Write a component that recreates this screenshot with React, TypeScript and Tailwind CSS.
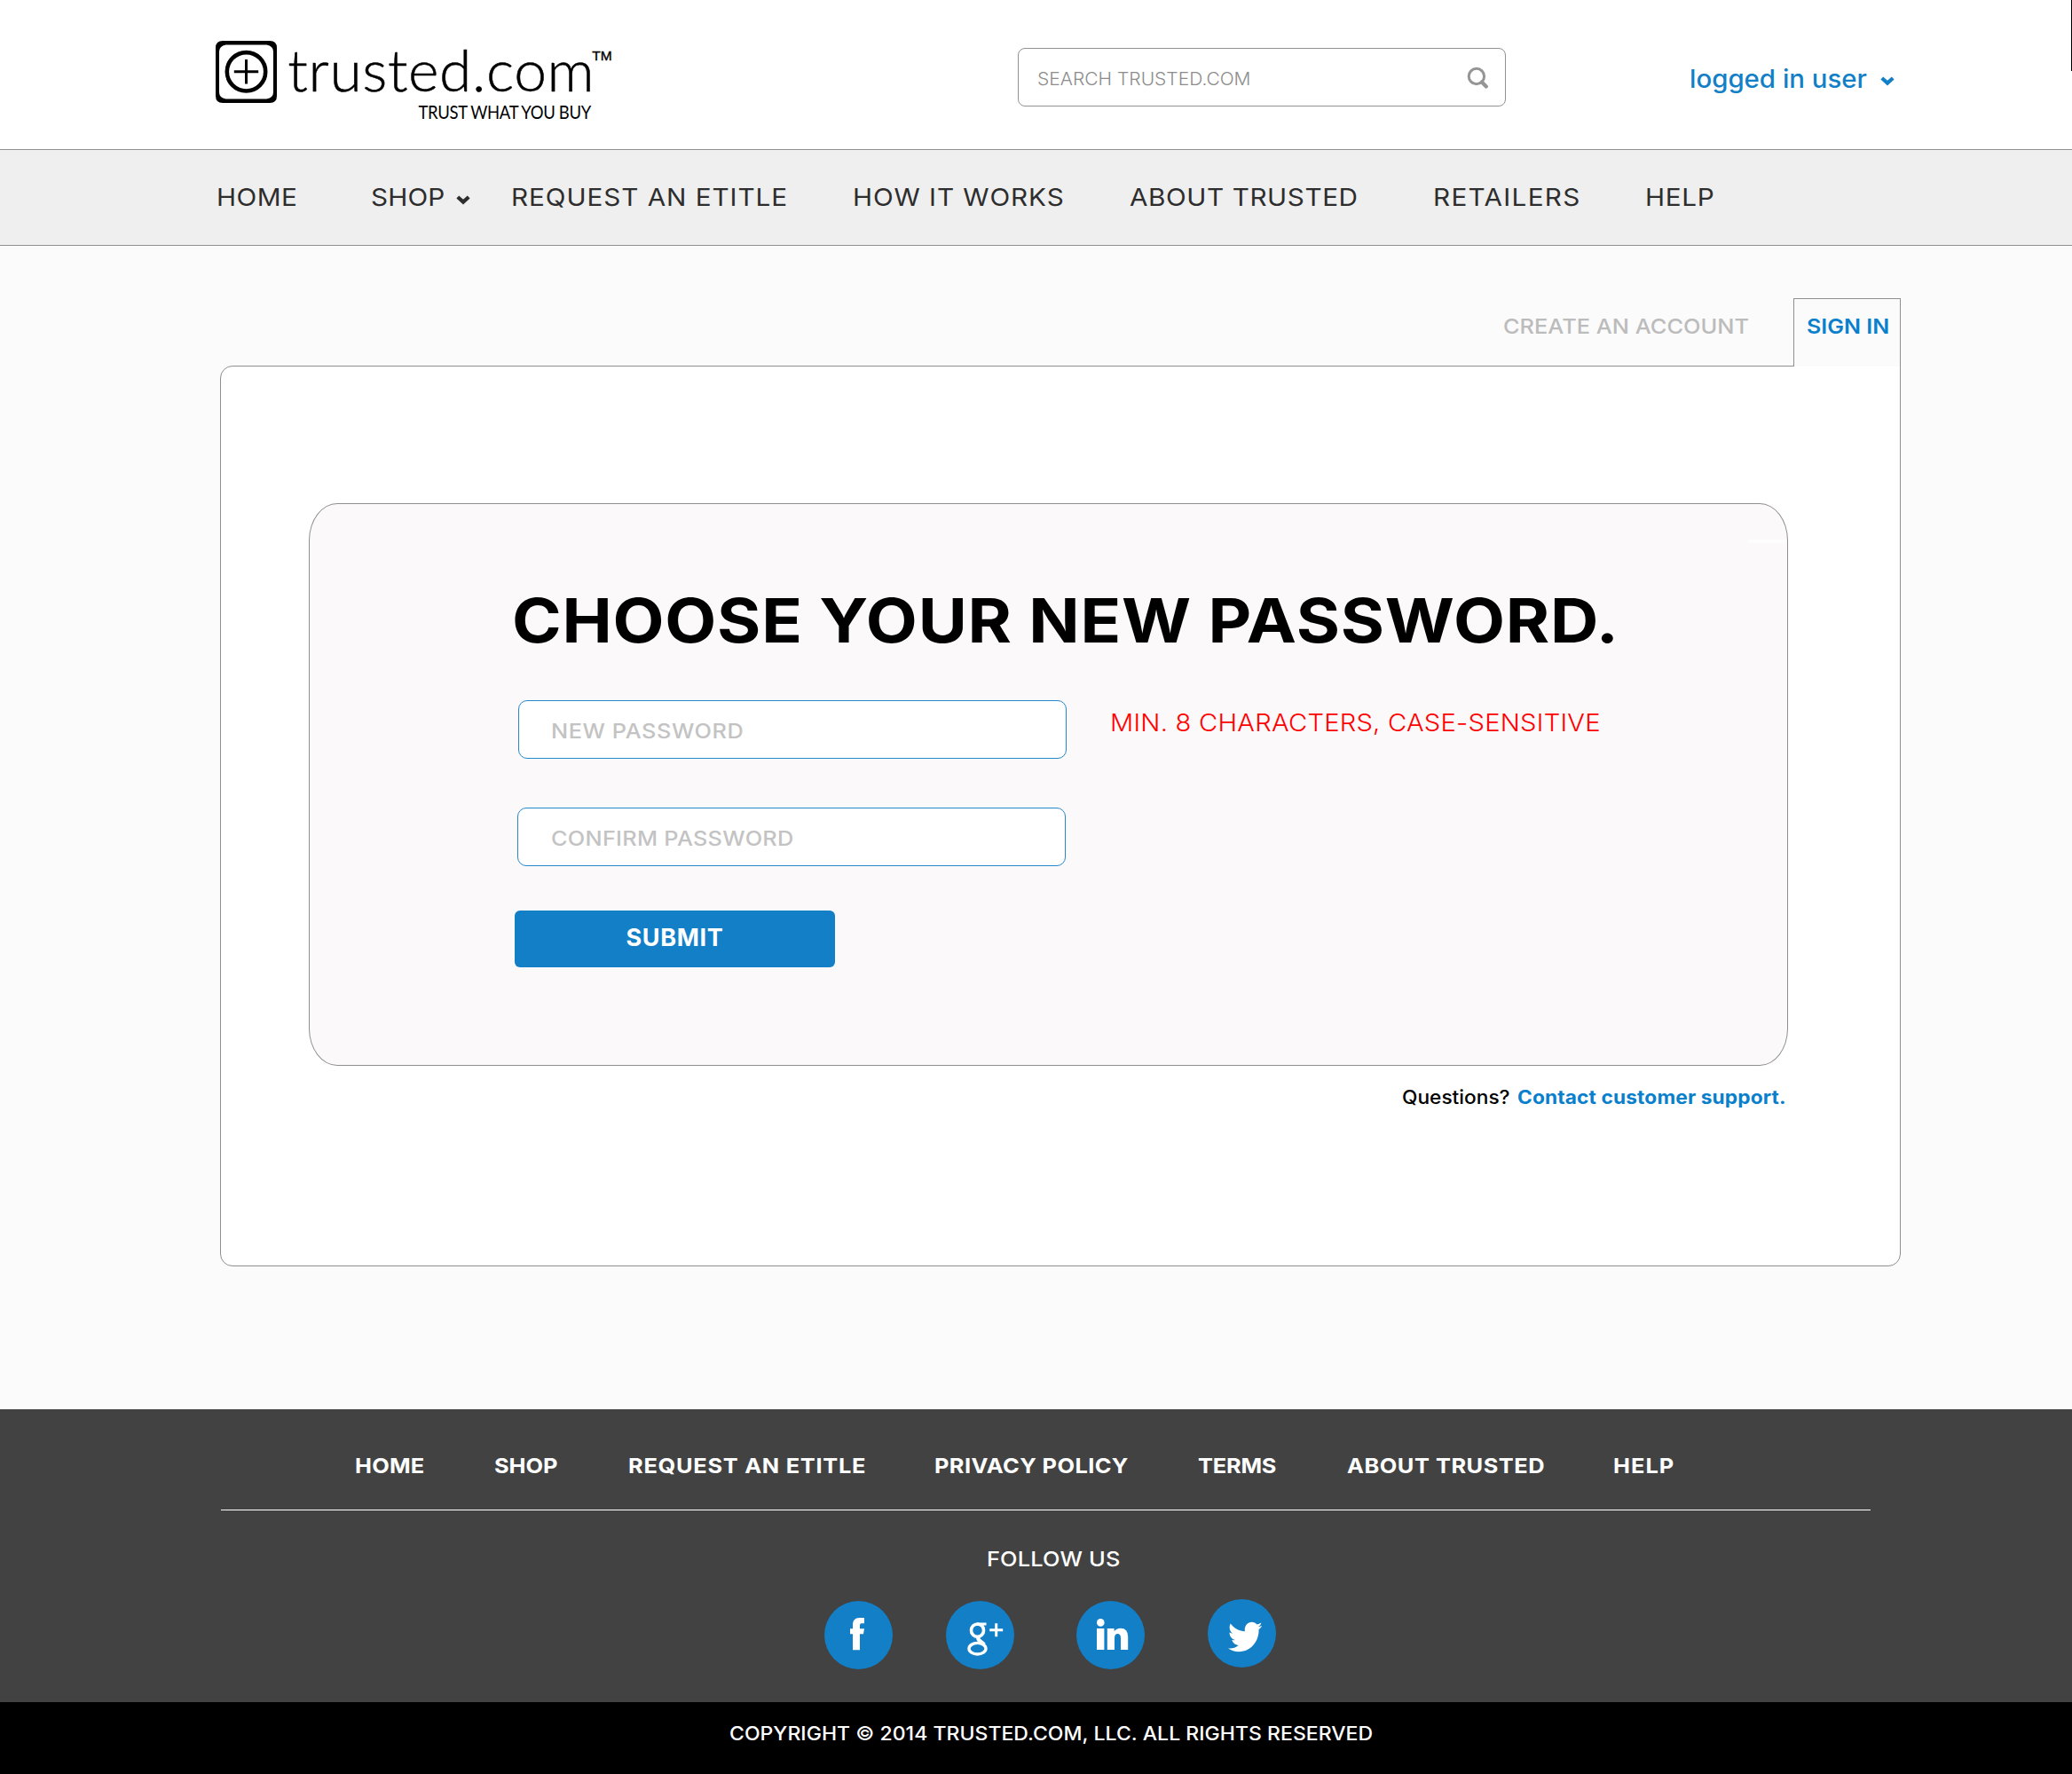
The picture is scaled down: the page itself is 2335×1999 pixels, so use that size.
import { FaTwitter } from "react-icons/fa";

const mainNav = [
  { label: "HOME", width: "w-[173.5px]", text: "tracking-[0.45px]" },
  { label: "SHOP", width: "w-[158.2px]", text: "w-[86px] tracking-[0.12px]", menu: true },
  { label: "REQUEST AN ETITLE", width: "w-[385.3px]", text: "tracking-[0.86px]" },
  { label: "HOW IT WORKS", width: "w-[312.5px]", text: "tracking-[0.84px]" },
  { label: "ABOUT TRUSTED", width: "w-[341.1px]", text: "tracking-[0.53px]" },
  { label: "RETAILERS", width: "w-[239.4px]", text: "tracking-[1.2px]" },
  { label: "HELP", width: "w-[90px]", text: "tracking-[0.64px]" },
];

const footerNav = [
  { label: "HOME", width: "w-[156.5px]", text: "tracking-[0.2px]" },
  { label: "SHOP", width: "w-[151.3px]", text: "tracking-[-0.05px]" },
  { label: "REQUEST AN ETITLE", width: "w-[345.6px]", text: "tracking-[0.67px]" },
  { label: "PRIVACY POLICY", width: "w-[297.1px]", text: "tracking-[0.37px]" },
  { label: "TERMS", width: "w-[167.2px]", text: "tracking-[-0.2px]" },
  { label: "ABOUT TRUSTED", width: "w-[300.5px]", text: "tracking-[0.48px]" },
  { label: "HELP", width: "w-[90px]", text: "tracking-[0.97px]" },
];

function Chevron({ className }: { className: string }) {
  return (
    <svg viewBox="0 0 16 11" className={`h-[11px] w-4 shrink-0 ${className}`} fill="none" stroke="currentColor" strokeWidth="4.2">
      <path d="M1.8 2 8 7.6 14.2 2" />
    </svg>
  );
}

function Logo() {
  return (
    <a className="flex w-[904px] text-black">
      <svg viewBox="0 0 69 70" className="mt-[45.5px] h-[70px] w-[69px] shrink-0">
        <path
          fillRule="evenodd"
          d="M8 0H61Q69 0 69 8V62Q69 70 61 70H8Q0 70 0 62V8Q0 0 8 0ZM11.5 4.5Q4 6 4 12V58Q4 64 11.5 65.5H57.5Q65 64 65 58V12Q65 6 57.5 4.5Z"
        />
        <circle cx="34.5" cy="34.8" r="21.7" fill="none" stroke="black" strokeWidth="4.6" />
        <path d="M34.5 21V48.5M20.8 34.8H48.2" stroke="black" strokeWidth="3" />
      </svg>
      <div className="mt-[45.3px] ml-[12.3px] w-[342px] shrink-0 font-[Lato,sans-serif]">
        <div className="text-[66px] leading-[66px] font-light tracking-[0.6px] whitespace-nowrap [-webkit-text-stroke:0.5px_black]">trusted.com</div>
        <div className="mt-[3.9px] flex justify-end">
          <span className="origin-right scale-x-[0.88] text-[21px] leading-[22px] tracking-[-0.4px] whitespace-nowrap">TRUST WHAT YOU BUY</span>
        </div>
      </div>
      <span className="mt-[54.5px] ml-[1px] font-['Liberation_Sans',sans-serif] text-[15.5px] leading-4 [-webkit-text-stroke:0.4px_black]">TM</span>
    </a>
  );
}

function Header() {
  return (
    <header className="relative flex h-[169px] items-start border-b border-[#8f8f8f] bg-white pl-[243px]">
      <Logo />
      <div className="mt-[54px] flex h-[66px] w-[550px] shrink-0 items-center justify-between rounded-[8px] border border-[#929292] pr-[18px] pl-[20.5px]">
        <span className="mt-[3px] origin-left scale-x-[1.05] text-[20px] leading-[30px] font-light text-[#8c8c8c]">SEARCH TRUSTED.COM</span>
        <svg viewBox="0 0 25 25" className="h-[25px] w-[25px]" fill="none" stroke="#959595">
          <circle cx="10.9" cy="11" r="8.7" strokeWidth="3" />
          <path d="M17 17.5 21.8 22.5" strokeWidth="4.2" strokeLinecap="round" />
        </svg>
      </div>
      <div className="mt-[71.3px] ml-[206.5px] flex items-center text-[#127fc6]">
        <span className="w-[215.7px] origin-left">
          <span className="inline-block origin-left scale-x-[1.05] text-[28px] leading-9 font-medium whitespace-nowrap">logged in user</span>
        </span>
        <Chevron className="mt-1" />
      </div>
      <div className="absolute top-0 right-0 h-20 w-px bg-black" />
    </header>
  );
}

function Field({ label, className, textClass }: { label: string; className: string; textClass: string }) {
  return (
    <div className={`h-[66px] w-[618px] shrink-0 rounded-[10px] border border-[#2488ca] bg-white pt-[19px] ${className}`}>
      <div className={`w-fit origin-left scale-x-110 text-[23px] leading-[30px] font-medium text-[#c3c3c3] ${textClass}`}>{label}</div>
    </div>
  );
}

function Main() {
  return (
    <main className="h-[1311px] bg-[#fbfbfb] pt-[59px] pl-[248px]">
      <div className="flex h-[76px] w-[1894px] justify-end text-[23.5px] leading-[30px] whitespace-nowrap">
        <div className="w-[327px] pt-[17.3px]">
          <span className="inline-block origin-left scale-x-[1.08] font-medium text-[#bcbcbc]">CREATE AN ACCOUNT</span>
        </div>
        <div className="relative z-10 h-[77px] w-[121px] border-x border-t border-[#8f8f8f] bg-[#fbfbfb] pt-[16.3px] pl-[14px]">
          <span className="inline-block origin-left scale-x-[1.065] font-semibold text-[#0a80cc]">SIGN IN</span>
        </div>
      </div>
      <div className="h-[1015px] w-[1894px] rounded-[14px] rounded-tr-none border border-[#8f8f8f] bg-white pt-[154px] pl-[99px]">
        <section className="relative h-[634px] w-[1667px] rounded-[32px_/_42px] border border-[#8f8f8f] bg-[#fbf9fa] pt-[92.2px]">
          <div className="absolute top-[40px] right-[2px] h-1 w-[42px] bg-white/70" />
          <h1 className="ml-[228.2px] w-fit origin-left scale-x-110 text-[68.5px] leading-[80px] font-bold tracking-[0.67px] whitespace-nowrap text-black">
            CHOOSE YOUR NEW PASSWORD.
          </h1>
          <div className="mt-[48.8px] flex">
            <Field label="NEW PASSWORD" className="ml-[235px] pl-[36px]" textClass="tracking-[0.52px]" />
            <p className="mt-[11px] ml-[48.6px] origin-left scale-x-[1.08] text-[27px] leading-[30px] font-light tracking-[0.21px] whitespace-nowrap text-[#ff0000]">
              MIN. 8 CHARACTERS, CASE-SENSITIVE
            </p>
          </div>
          <Field label="CONFIRM PASSWORD" className="mt-[55px] ml-[234px] pl-[36.6px]" textClass="tracking-[0.25px]" />
          <button className="mt-[50px] ml-[231px] block h-16 w-[361px] rounded-[6px] bg-[#127fc6] pb-[2px] text-[27px] leading-[30px] font-bold tracking-[0.67px] text-white">
            SUBMIT
          </button>
        </section>
        <p className="mt-[21.7px] ml-[1232px] flex text-[21px] leading-7 whitespace-nowrap">
          <span className="w-[129.5px]">
            <span className="inline-block origin-left scale-x-[1.08] font-medium text-black">Questions?</span>
          </span>
          <a className="origin-left scale-x-[1.08] font-bold tracking-[0.13px] text-[#0a80cc]">Contact customer support.</a>
        </p>
      </div>
    </main>
  );
}

function Disc({ className, children }: { className: string; children: React.ReactNode }) {
  return (
    <a className={`block h-[77px] w-[77px] overflow-hidden rounded-full bg-[#127fc6] text-white ${className}`}>{children}</a>
  );
}

function Footer() {
  return (
    <footer>
      <div className="h-[330px] bg-[#424242] pt-[48.5px] text-[23.5px] leading-[30px] text-white">
        <nav className="flex pl-[400px] font-bold whitespace-nowrap">
          {footerNav.map((n) => (
            <a key={n.label} className={`shrink-0 ${n.width}`}>
              <span className={`block w-fit origin-left scale-x-[1.08] ${n.text}`}>{n.label}</span>
            </a>
          ))}
        </nav>
        <div className="mt-[34.5px] ml-[249px] h-px w-[1859px] bg-white" />
        <div className="mt-[39.5px] ml-[1111.5px] w-fit origin-left scale-x-[1.08] font-medium tracking-[0.15px]">FOLLOW US</div>
        <div className="mt-[32.5px] flex pl-[929px]">
          <Disc className="">
            <svg viewBox="0 0 77 77" className="h-full w-full" fill="currentColor">
              <path d="M45 19H39.5C34.5 19 32 22 32 27V31.2H29V37.2H32V55.2H40V37.2H44L45 31.2H40V28C40 26 40.7 25.3 42 25.3H45Z" />
            </svg>
          </Disc>
          <Disc className="ml-[60px]">
            <svg viewBox="0 0 77 77" className="h-full w-full" fill="none" stroke="currentColor">
              <ellipse cx="35.5" cy="33.2" rx="7" ry="7.2" strokeWidth="3.6" />
              <path d="M35 26H45.5" strokeWidth="2.8" />
              <path d="M37.5 26.5H41Q43 29 43 34" strokeWidth="2" />
              <path d="M36.5 40.5Q35.5 43.5 39 45.5Q41.5 47 43 49" strokeWidth="4.2" />
              <ellipse cx="35.5" cy="53.7" rx="9.5" ry="6.3" strokeWidth="3.4" />
              <path d="M56.7 25.3V40.3M49.2 32.8H64.2" strokeWidth="3" />
            </svg>
          </Disc>
          <Disc className="ml-[70px]">
            <svg viewBox="0 0 77 77" className="h-full w-full" fill="currentColor">
              <circle cx="27.3" cy="24.4" r="4.3" />
              <path d="M23 31H31.4V55H23ZM34.8 31H42.6V34.2Q45.2 30.7 49.8 30.7Q58.2 30.7 58.2 40.5V55H50V42Q50 37 46.5 37Q43 37 43 42V55H34.8Z" />
            </svg>
          </Disc>
          <Disc className="mt-[-2px] ml-[71px]">
            <FaTwitter preserveAspectRatio="none" className="mt-[22px] ml-[22.6px] h-[41px] w-[38.5px]" />
          </Disc>
        </div>
      </div>
      <div className="h-[81px] bg-black pt-5 pl-[822px] text-[21.5px] leading-[30px] font-medium whitespace-nowrap text-white">
        <p className="w-fit origin-left scale-x-[1.07] tracking-[0.03px]">COPYRIGHT © 2014 TRUSTED.COM, LLC. ALL RIGHTS RESERVED</p>
      </div>
    </footer>
  );
}

export default function App() {
  return (
    <div className="h-[1999px] w-[2335px] overflow-hidden bg-white font-[Inter,sans-serif]">
      <Header />
      <nav className="flex h-[108px] border-b border-[#8f8f8f] bg-[#efefef] pt-[34.5px] pl-[244px] text-[27.5px] leading-9 whitespace-nowrap text-[#2d2d2d]">
        {mainNav.map((n) => (
          <a key={n.label} className={`flex shrink-0 ${n.width}`}>
            <span className={`block origin-left scale-x-[1.08] ${n.text}`}>{n.label}</span>
            {n.menu && <Chevron className="mt-[16.5px] ml-[10.5px]" />}
          </a>
        ))}
      </nav>
      <Main />
      <Footer />
    </div>
  );
}
